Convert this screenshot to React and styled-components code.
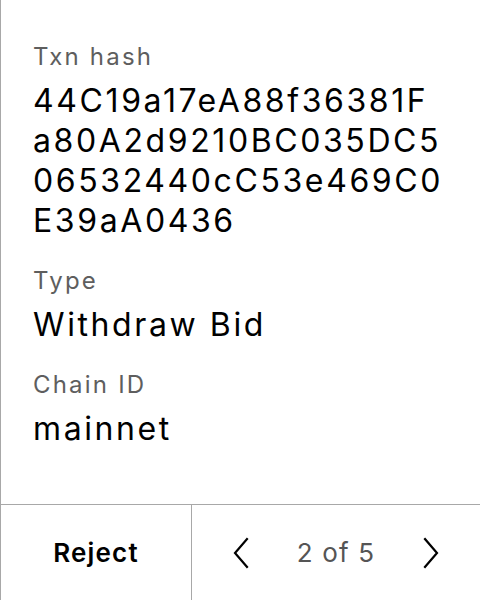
import React from "react";
import styled, { createGlobalStyle } from "styled-components";

const Global = createGlobalStyle`
  html, body { margin: 0; padding: 0; background: #fff; }
  body { font-family: Inter, "Noto Sans", sans-serif; color: #000; }
  * { box-sizing: border-box; }
`;

const Page = styled.div`
  width: 480px;
  height: 600px;
  display: flex;
  flex-direction: column;
  border-left: 1px solid #a8a8a8;
  overflow: hidden;
`;

const Body = styled.div`
  flex: 1;
  display: flex;
  flex-direction: column;
  gap: 24px;
  padding: 41px 32px 0 32px;
`;

const Field = styled.div`
  display: flex;
  flex-direction: column;
  gap: 8px;
`;

const Label = styled.div`
  font-size: 24px;
  line-height: 32px;
  letter-spacing: 2.2px;
  color: #5e5e5e;
`;

const Value = styled.div`
  font-size: 32px;
  line-height: 40px;
  letter-spacing: 2.6px;
  color: #000;
  word-break: break-all;
  width: 413px;
`;

const Footer = styled.div`
  height: 96px;
  flex: none;
  display: grid;
  grid-template-columns: 191px 1fr;
  border-top: 1px solid #a8a8a8;
`;

const RejectButton = styled.button`
  border: none;
  border-right: 1px solid #a8a8a8;
  background: transparent;
  font-family: inherit;
  font-size: 26px;
  font-weight: 600;
  letter-spacing: 1.2px;
  color: #000;
  display: flex;
  align-items: center;
  justify-content: center;
  padding: 0;
`;

const Pager = styled.div`
  display: flex;
  align-items: center;
  justify-content: center;
  gap: 48px;
`;

const NavButton = styled.button`
  border: none;
  background: transparent;
  padding: 0;
  width: 16px;
  height: 32px;
  display: flex;
  align-items: center;
  justify-content: center;
`;

const Count = styled.span`
  font-size: 26px;
  letter-spacing: 1.2px;
  color: #555;
`;

const Chevron = ({ dir }) => (
  <svg width="16" height="32" viewBox="0 0 16 32" fill="none">
    <path
      d={dir === "left" ? "M14 2 L2 16 L14 30" : "M2 2 L14 16 L2 30"}
      stroke="#000"
      strokeWidth="2.2"
      strokeLinecap="square"
      strokeLinejoin="miter"
    />
  </svg>
);

const fields = [
  { label: "Txn hash", value: "44C19a17eA88f36381Fa80A2d9210BC035DC506532440cC53e469C0E39aA0436" },
  { label: "Type", value: "Withdraw Bid" },
  { label: "Chain ID", value: "mainnet" },
];

export default function App() {
  return (
    <>
      <Global />
      <Page>
        <Body>
          {fields.map((f) => (
            <Field key={f.label}>
              <Label>{f.label}</Label>
              <Value>{f.value}</Value>
            </Field>
          ))}
        </Body>
        <Footer>
          <RejectButton>Reject</RejectButton>
          <Pager>
            <NavButton aria-label="Previous"><Chevron dir="left" /></NavButton>
            <Count>2 of 5</Count>
            <NavButton aria-label="Next"><Chevron dir="right" /></NavButton>
          </Pager>
        </Footer>
      </Page>
    </>
  );
}
